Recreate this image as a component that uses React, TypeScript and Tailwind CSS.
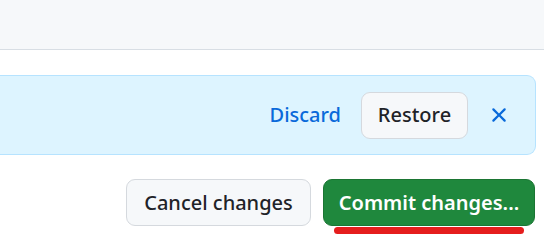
import React from "react";

function XIcon() {
  return (
    <svg viewBox="0 0 16 16" width="24" height="24" fill="#0969da" aria-hidden="true">
      <path d="M3.72 3.72a.75.75 0 0 1 1.06 0L8 6.94l3.22-3.22a.749.749 0 0 1 1.275.326.749.749 0 0 1-.215.734L9.06 8l3.22 3.22a.749.749 0 0 1-.326 1.275.749.749 0 0 1-.734-.215L8 9.06l-3.22 3.22a.751.751 0 0 1-1.042-.018.751.751 0 0 1-.018-1.042L6.94 8 3.72 4.78a.75.75 0 0 1 0-1.06Z" />
    </svg>
  );
}

function App() {
  return (
    <div className="h-[250px] w-[544px] overflow-hidden bg-white font-['Noto_Sans',sans-serif] text-[#1f2328]">
      <div className="h-[50px] border-b-[1.5px] border-[#d8dee4] bg-[#f6f8fa]" />

      <div className="pr-[8px] pt-[25px]">
        <div className="flex h-[80px] items-center justify-end rounded-r-[9px] border border-l-0 border-[#b6e3ff] bg-[#ddf4ff] pr-[13px]">
          <button className="mr-[20px] text-[20px] font-medium text-[#0969da]">Discard</button>
          <button className="flex h-[47px] w-[107px] items-center justify-center rounded-[9px] border border-[#d5d9de] bg-[#f6f8fa] text-[20px] font-medium">
            Restore
          </button>
          <button className="ml-[8px] flex h-[46px] w-[46px] items-center justify-center">
            <XIcon />
          </button>
        </div>
      </div>

      <div className="flex justify-end gap-[12px] pr-[9px] pt-[24px]">
        <button className="flex h-[47px] w-[185px] items-center justify-center rounded-[9px] border border-[#d5d9de] bg-[#f6f8fa] text-[20px] font-medium">
          Cancel changes
        </button>
        <div className="flex flex-col">
          <button className="flex h-[47px] w-[212px] items-center justify-center rounded-[9px] border border-[#1b7533] bg-[#1f883d] text-[20px] font-semibold text-white">
            Commit changes...
          </button>
          <div className="mx-[11px] mt-[1px] h-[7px] rounded-full bg-[#e51d1d]" />
        </div>
      </div>
    </div>
  );
}

export default App;
